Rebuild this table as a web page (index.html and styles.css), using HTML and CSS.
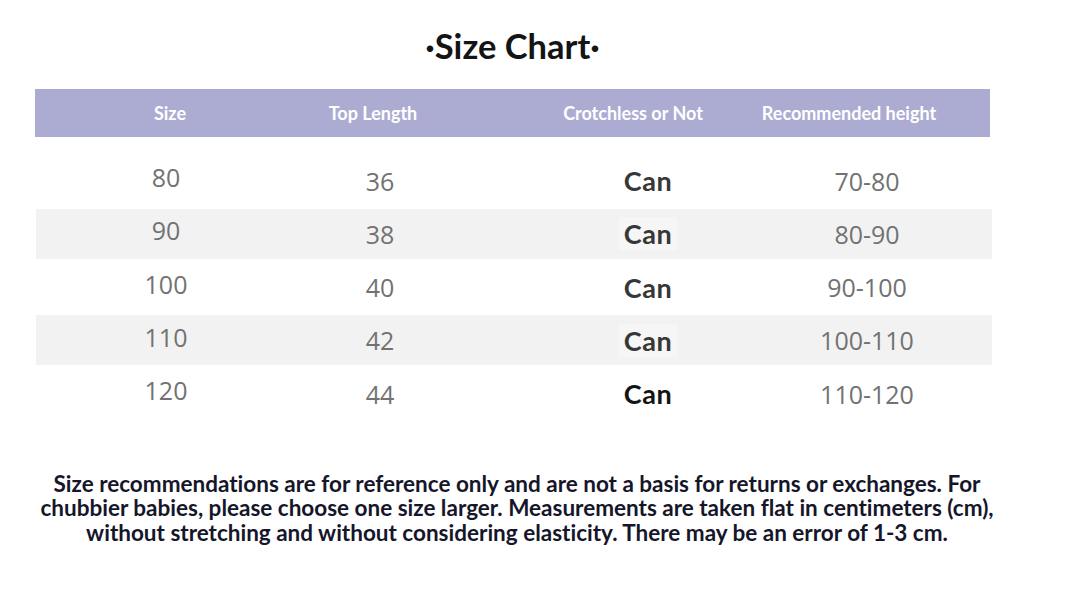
FILE: index.html
```html
<!DOCTYPE html>
<html>
<head>
<meta charset="utf-8">
<link rel="stylesheet" href="styles.css">
</head>
<body>
<div class="page">
  <h1 class="title">·Size Chart·</h1>
  <div class="chart">
    <div class="head">
      <div class="hc">Size</div>
      <div class="hc">Top Length</div>
      <div class="hc">Crotchless or Not</div>
      <div class="hc">Recommended height</div>
    </div>
    <div class="rows">
      <div class="row"><div class="c1">80</div><div class="c2">36</div><div class="c3"><span class="can">Can</span></div><div class="c4">70-80</div></div>
      <div class="row alt"><div class="c1">90</div><div class="c2">38</div><div class="c3"><span class="can">Can</span></div><div class="c4">80-90</div></div>
      <div class="row"><div class="c1">100</div><div class="c2">40</div><div class="c3"><span class="can">Can</span></div><div class="c4">90-100</div></div>
      <div class="row alt"><div class="c1">110</div><div class="c2">42</div><div class="c3"><span class="can">Can</span></div><div class="c4">100-110</div></div>
      <div class="row"><div class="c1">120</div><div class="c2">44</div><div class="c3"><span class="can dark">Can</span></div><div class="c4">110-120</div></div>
    </div>
  </div>
  <p class="note">Size recommendations are for reference only and are not a basis for returns or exchanges. For<br>chubbier babies, please choose one size larger. Measurements are taken flat in centimeters (cm),<br>without stretching and without considering elasticity. There may be an error of 1-3 cm.</p>
</div>
</body>
</html>
```
FILE: styles.css
```css
html, body {
  margin: 0;
  padding: 0;
  background: #ffffff;
}
body {
  font-family: Lato, "Liberation Sans", sans-serif;
  font-variant-ligatures: none;
  width: 1079px;
  height: 594px;
  overflow: hidden;
}
.page {
  padding-top: 27px;
}
.title {
  margin: 0;
  text-align: center;
  font-size: 34.5px;
  line-height: 38px;
  font-weight: 700;
  color: #141414;
  padding-right: 54px;
}
.chart {
  margin-top: 24px;
  margin-left: 35px;
  width: 957px;
}
.head {
  width: 955px;
  height: 48px;
  background: #acacd2;
  display: grid;
  grid-template-columns: 130px 276px 244px 188px;
  padding-left: 70px;
  box-sizing: border-box;
  align-items: center;
}
.hc {
  display: flex;
  justify-content: center;
  white-space: nowrap;
  color: #ffffff;
  font-weight: 700;
  font-size: 18px;
  padding-bottom: 1px;
}
.rows {
  margin-top: 18.5px;
  margin-left: 1px;
  width: 956px;
  display: flex;
  flex-direction: column;
  gap: 3.33px;
}
.row {
  height: 50px;
  display: grid;
  grid-template-columns: 120px 308px 228px 210px;
  padding-left: 70px;
  box-sizing: border-box;
  align-items: center;
  font-family: "Open Sans", "Noto Sans", sans-serif;
  font-size: 25px;
  color: #727272;
}
.row.alt {
  background: #f2f2f2;
}
.row > div {
  display: flex;
  justify-content: center;
  white-space: nowrap;
}
.c1 {
  padding-bottom: 7px;
}
.can {
  font-family: Lato, "Liberation Sans", sans-serif;
  font-weight: 700;
  font-size: 27px;
  letter-spacing: 0.6px;
  color: #373737;
  padding: 0 5px;
  background: rgba(255,255,255,0.35);
}
.can.dark {
  color: #141414;
}
.note {
  margin: 53px 0 0 0;
  width: 1034px;
  text-align: center;
  font-size: 22.5px;
  line-height: 24.5px;
  font-weight: 700;
  color: #16162a;
}
```
